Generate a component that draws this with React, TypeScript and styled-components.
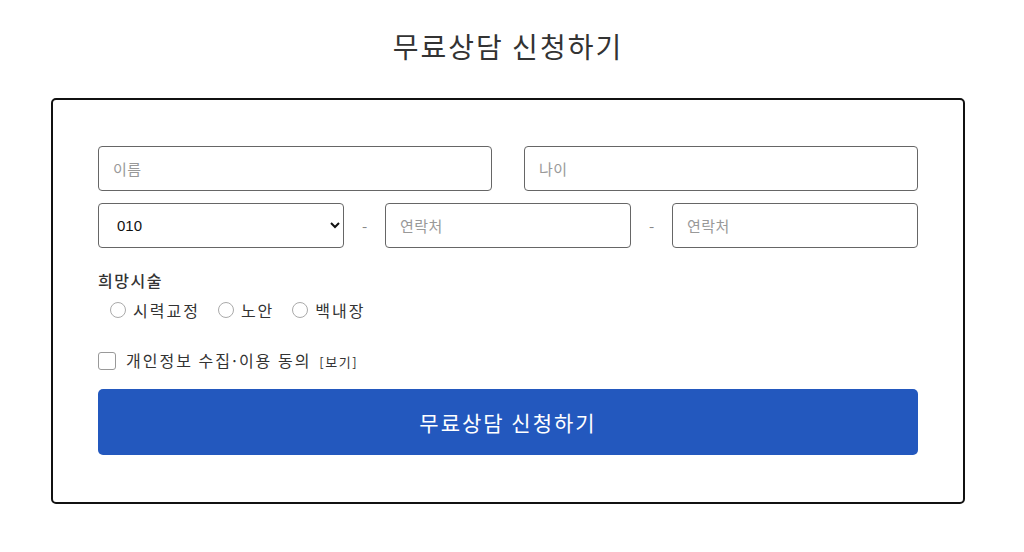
import React from 'react';
import { createGlobalStyle, styled } from 'styled-components';

const GlobalStyle = createGlobalStyle`
    body {
        margin: 0;
        background: #fff;
        font-family: "Noto Sans CJK KR", "Noto Sans", sans-serif;
        color: #333;
    }
`;

const Page = styled.div`
    width: 914px;
    margin-left: 51px;
    padding-top: 26px;
`;

const Title = styled.h2`
    margin: 0 0 32px;
    text-align: center;
    font-size: 28px;
    font-weight: 400;
    letter-spacing: 2px;
    line-height: 40px;
    color: #333;
`;

const Card = styled.form`
    border: 2px solid #111;
    border-radius: 5px;
    padding: 46px 45px 47px;
    display: flex;
    flex-direction: column;
`;

const Row = styled.div<{ $gap?: number }>`
    display: flex;
    align-items: center;
    gap: ${(p) => p.$gap ?? 32}px;
    margin-bottom: 12px;
`;

const Input = styled.input`
    flex: 1;
    min-width: 0;
    height: 45px;
    box-sizing: border-box;
    border: 1px solid #666;
    border-radius: 4px;
    padding: 0 14px;
    font-family: "Noto Sans CJK KR", sans-serif;
    font-size: 15px;
    letter-spacing: 0.5px;
    color: #333;
    &::placeholder {
        color: #999;
    }
`;

const Select = styled.select`
    flex: 1;
    min-width: 0;
    height: 45px;
    box-sizing: border-box;
    border: 1px solid #666;
    border-radius: 4px;
    padding: 0 14px 0 14px;
    font-family: "Liberation Sans", Arial, sans-serif;
    font-size: 15px;
    color: #111;
    background: #fff;
`;

const Dash = styled.span`
    width: 1px;
    display: flex;
    justify-content: center;
    color: #888;
    font-size: 15px;
`;

const Label = styled.div`
    margin-top: 9px;
    font-size: 16px;
    font-weight: 500;
    letter-spacing: 1.5px;
    color: #333;
    line-height: 22px;
`;

const Options = styled.div`
    display: flex;
    gap: 18px;
    padding-left: 12px;
    margin-top: 7px;
`;

const Option = styled.label`
    display: flex;
    align-items: center;
    gap: 7px;
    font-size: 16px;
    letter-spacing: 2px;
    color: #333;
    line-height: 24px;
`;

const Radio = styled.span`
    width: 16px;
    height: 16px;
    border: 1px solid #aaa;
    border-radius: 50%;
    box-sizing: border-box;
`;

const Agree = styled.label`
    display: flex;
    align-items: center;
    gap: 10px;
    margin-top: 26px;
    font-size: 16px;
    letter-spacing: 2px;
    color: #333;
    line-height: 24px;
`;

const Dot = styled.span`
    letter-spacing: 0;
    margin-left: -2px;
`;

const Box = styled.span`
    width: 18px;
    height: 18px;
    border: 1px solid #999;
    border-radius: 3px;
    box-sizing: border-box;
`;

const View = styled.span`
    font-size: 13px;
    letter-spacing: 1.5px;
    margin-left: 8px;
`;

const Submit = styled.button`
    margin-top: 15px;
    height: 66px;
    border: none;
    border-radius: 5px;
    background: #2358be;
    color: #fff;
    font-family: "Noto Sans CJK KR", sans-serif;
    font-size: 21px;
    font-weight: 400;
    letter-spacing: 2px;
`;

const App: React.FC = () => {
    const treatments = ['시력교정', '노안', '백내장'];

    return (
        <>
            <GlobalStyle />
            <Page>
                <Title>무료상담 신청하기</Title>
                <Card onSubmit={(e) => e.preventDefault()}>
                    <Row>
                        <Input placeholder="이름" />
                        <Input placeholder="나이" />
                    </Row>
                    <Row $gap={20}>
                        <Select defaultValue="010">
                            <option>010</option>
                            <option>011</option>
                            <option>016</option>
                        </Select>
                        <Dash>-</Dash>
                        <Input placeholder="연락처" />
                        <Dash>-</Dash>
                        <Input placeholder="연락처" />
                    </Row>
                    <Label>희망시술</Label>
                    <Options>
                        {treatments.map((t) => (
                            <Option key={t}>
                                <Radio />
                                {t}
                            </Option>
                        ))}
                    </Options>
                    <Agree>
                        <Box />
                        <span>
                            개인정보 수집<Dot>·</Dot>이용 동의
                            <View>[보기]</View>
                        </span>
                    </Agree>
                    <Submit type="submit">무료상담 신청하기</Submit>
                </Card>
            </Page>
        </>
    );
};

export default App;
